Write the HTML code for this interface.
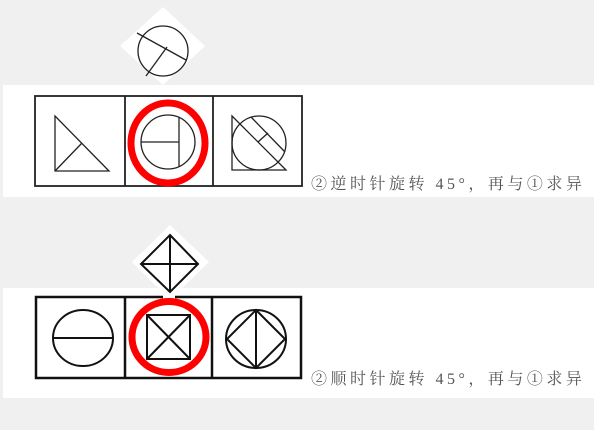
<!DOCTYPE html>
<html><head><meta charset="utf-8"><style>
html,body{margin:0;padding:0;background:#f0f0f0;width:594px;height:430px;overflow:hidden;position:relative}
svg{position:absolute;left:0;top:0}
.t{position:absolute;left:311px;font-family:"Liberation Serif","Noto Serif CJK SC",serif;font-size:16px;color:#555;letter-spacing:3.5px;white-space:nowrap}
</style></head><body>
<svg width="594" height="430" viewBox="0 0 594 430">
<rect x="3" y="85" width="591" height="112" fill="#fff"/>
<polygon points="163,7 205,46 163,85 120,46" fill="#fff"/>
<g fill="none" stroke="#222" stroke-width="1.3">
<ellipse cx="163" cy="51" rx="25" ry="25"/>
<line x1="137" y1="33" x2="186" y2="60"/><line x1="167" y1="47" x2="146" y2="76"/>
<g stroke-width="1.8"><rect x="35" y="96" width="267" height="90"/><line x1="125" y1="96" x2="125" y2="186"/><line x1="213" y1="96" x2="213" y2="186"/></g>
<polygon points="55,116 55,171 109,171"/><line x1="55" y1="171" x2="82" y2="143"/>
<ellipse cx="168" cy="142" rx="27" ry="27"/><line x1="141" y1="142" x2="179" y2="142"/><line x1="179" y1="117" x2="179" y2="167"/>
<ellipse cx="259" cy="143" rx="27" ry="27"/>
<polygon points="232,116 232,170 286,170"/><line x1="251" y1="117" x2="285" y2="152"/><line x1="258" y1="142" x2="268" y2="133"/>
</g>
<ellipse cx="168" cy="143" rx="37" ry="40" fill="none" stroke="#f00" stroke-width="7"/>

<rect x="3" y="288" width="591" height="110" fill="#fff"/>
<polygon points="170,225 209,262 170,300 132,262" fill="#fff"/>
<g fill="none" stroke="#111" stroke-width="2">
<polygon points="170,235 198,264 170,292 141,264"/><line x1="170" y1="235" x2="170" y2="292"/><line x1="141" y1="264" x2="198" y2="264"/>
<g stroke-width="2.5"><rect x="36" y="297" width="265" height="81"/><line x1="125" y1="297" x2="125" y2="378"/><line x1="212" y1="297" x2="212" y2="378"/></g>
<ellipse cx="83" cy="338" rx="30" ry="28"/><line x1="53" y1="338" x2="113" y2="338"/>
<rect x="147" y="315" width="43" height="44"/><line x1="147" y1="315" x2="190" y2="359"/><line x1="190" y1="315" x2="147" y2="359"/>
<ellipse cx="256" cy="339" rx="30" ry="29"/><polygon points="256,310 285,339 256,368 227,339"/><line x1="256" y1="310" x2="256" y2="368"/>
</g>
<rect x="163" y="294" width="12" height="6" fill="#fff"/>
<ellipse cx="169" cy="337" rx="37" ry="35.5" fill="none" stroke="#f00" stroke-width="7"/>
</svg>
<div class="t" style="top:171px">②逆时针旋转 45°，再与①求异</div>
<div class="t" style="top:366px">②顺时针旋转 45°，再与①求异</div>
</body></html>
